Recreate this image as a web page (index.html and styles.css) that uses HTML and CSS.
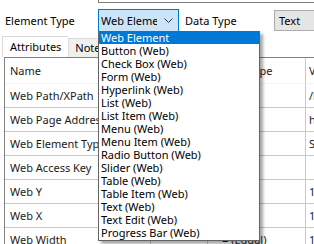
FILE: index.html
```html
<!DOCTYPE html>
<html lang="en">
<head>
    <meta charset="UTF-8">
    <title>Element Properties</title>
    <link rel="stylesheet" href="styles.css">
</head>
<body>
    <div class="screen">
        <div class="prev-field"></div>

        <div class="type-row">
            <span class="label">Element Type</span>
            <div class="combo">
                <span class="combo-text">Web Element</span>
                <svg class="chevron" width="9" height="6" viewBox="0 0 9 6">
                    <path d="M0.5 0.5 L4.5 4.5 L8.5 0.5" fill="none" stroke="#333" stroke-width="1"/>
                </svg>
            </div>
            <span class="label data-label">Data Type</span>
            <div class="textbox">Text</div>
        </div>

        <div class="tabs">
            <div class="tab active">Attributes</div>
            <div class="tab">Notes</div>
        </div>

        <div class="grid">
            <div class="cell head">Name</div>
            <div class="cell head"></div>
            <div class="cell head">Match Type</div>
            <div class="cell head value">Value</div>

            <div class="cell">Web Path/XPath</div>
            <div class="cell split"></div>
            <div class="cell"></div>
            <div class="cell value">/html</div>

            <div class="cell">Web Page Address</div>
            <div class="cell split"></div>
            <div class="cell"></div>
            <div class="cell value">http</div>

            <div class="cell">Web Element Type</div>
            <div class="cell split"></div>
            <div class="cell"></div>
            <div class="cell value">Span</div>

            <div class="cell">Web Access Key</div>
            <div class="cell split"></div>
            <div class="cell"></div>
            <div class="cell value"></div>

            <div class="cell">Web Y</div>
            <div class="cell split"></div>
            <div class="cell"></div>
            <div class="cell value">10</div>

            <div class="cell">Web X</div>
            <div class="cell split"></div>
            <div class="cell"></div>
            <div class="cell value">12</div>

            <div class="cell">Web Width</div>
            <div class="cell split"></div>
            <div class="cell match">= (Equal)</div>
            <div class="cell value">15</div>
        </div>

        <ul class="dropdown">
            <li class="selected">Web Element</li>
            <li>Button (Web)</li>
            <li>Check Box (Web)</li>
            <li>Form (Web)</li>
            <li>Hyperlink (Web)</li>
            <li>List (Web)</li>
            <li>List Item (Web)</li>
            <li>Menu (Web)</li>
            <li>Menu Item (Web)</li>
            <li>Radio Button (Web)</li>
            <li>Slider (Web)</li>
            <li>Table (Web)</li>
            <li>Table Item (Web)</li>
            <li>Text (Web)</li>
            <li>Text Edit (Web)</li>
            <li>Progress Bar (Web)</li>
        </ul>
    </div>
</body>
</html>
```

FILE: styles.css
```css
body {
    margin: 0;
    padding: 0;
    background-color: #fff;
    font-family: "Noto Sans", "Open Sans", sans-serif;
    font-size: 11px;
    color: #000;
}

.screen {
    position: relative;
    width: 314px;
    height: 244px;
    overflow: hidden;
}

/* bottom edge of the field above */
.prev-field {
    margin-left: 98px;
    height: 2px;
    border-left: 1px solid #7a7a7a;
    border-bottom: 1px solid #7a7a7a;
}

.type-row {
    display: flex;
    align-items: center;
    height: 23px;
    margin-top: 6px;
}

.label {
    width: 93px;
    padding-left: 5px;
    white-space: nowrap;
}

.combo {
    display: flex;
    align-items: center;
    box-sizing: border-box;
    width: 81px;
    height: 23px;
    padding: 0 5px 0 2px;
    background-color: #cce4f7;
    border: 1px solid #0078d7;
}

.combo-text {
    flex: 1;
    overflow: hidden;
    white-space: nowrap;
    margin-right: 7px;
}

.data-label {
    width: auto;
    padding-left: 6px;
}

.textbox {
    box-sizing: border-box;
    height: 21px;
    margin-left: auto;
    width: 40px;
    padding: 2px 0 0 4px;
    background-color: #e5e5e5;
    border: 1px solid #adadad;
    border-right: none;
}

.tabs {
    display: flex;
    align-items: flex-end;
    height: 21px;
    margin-top: 4px;
    padding-left: 2px;
}

.tab {
    box-sizing: border-box;
    height: 19px;
    padding: 1px 6px 0;
    background-color: #f0f0f0;
    border: 1px solid #d9d9d9;
    border-bottom: none;
}

.tab.active {
    height: 21px;
    padding: 2px 7px 0;
    background-color: #fff;
    border-right: none;
}

.grid {
    display: grid;
    grid-template-columns: 145px 58px 97px 1fr;
    grid-template-rows: 26px repeat(7, 24px);
    margin-left: 4px;
    border-top: 1px solid #828282;
    border-left: 1px solid #828282;
}

.cell {
    display: flex;
    align-items: center;
    padding-left: 5px;
    white-space: nowrap;
    overflow: hidden;
    border-bottom: 1px solid #c8c8c8;
    color: #1a1a1a;
}

.cell.head {
    border-bottom-color: #f4f4f4;
}

.cell.value {
    padding-left: 3px;
    border-left: 1px solid #c8c8c8;
}

.cell.split {
    border-left: 1px solid #c8c8c8;
    border-right: 1px solid #c8c8c8;
}

.cell.match {
    padding-left: 14px;
}

.dropdown {
    position: absolute;
    left: 98px;
    top: 31px;
    width: 160px;
    margin: 0;
    padding: 0 0 1px;
    list-style: none;
    background-color: #fff;
    border: 1px solid #646464;
    border-top: none;
    box-shadow: 3px 3px 3px rgba(0, 0, 0, 0.35);
}

.dropdown li {
    height: 13px;
    line-height: 13px;
    padding-left: 2px;
    white-space: nowrap;
}

.dropdown li.selected {
    background-color: #0078d7;
    color: #fff;
}
```
